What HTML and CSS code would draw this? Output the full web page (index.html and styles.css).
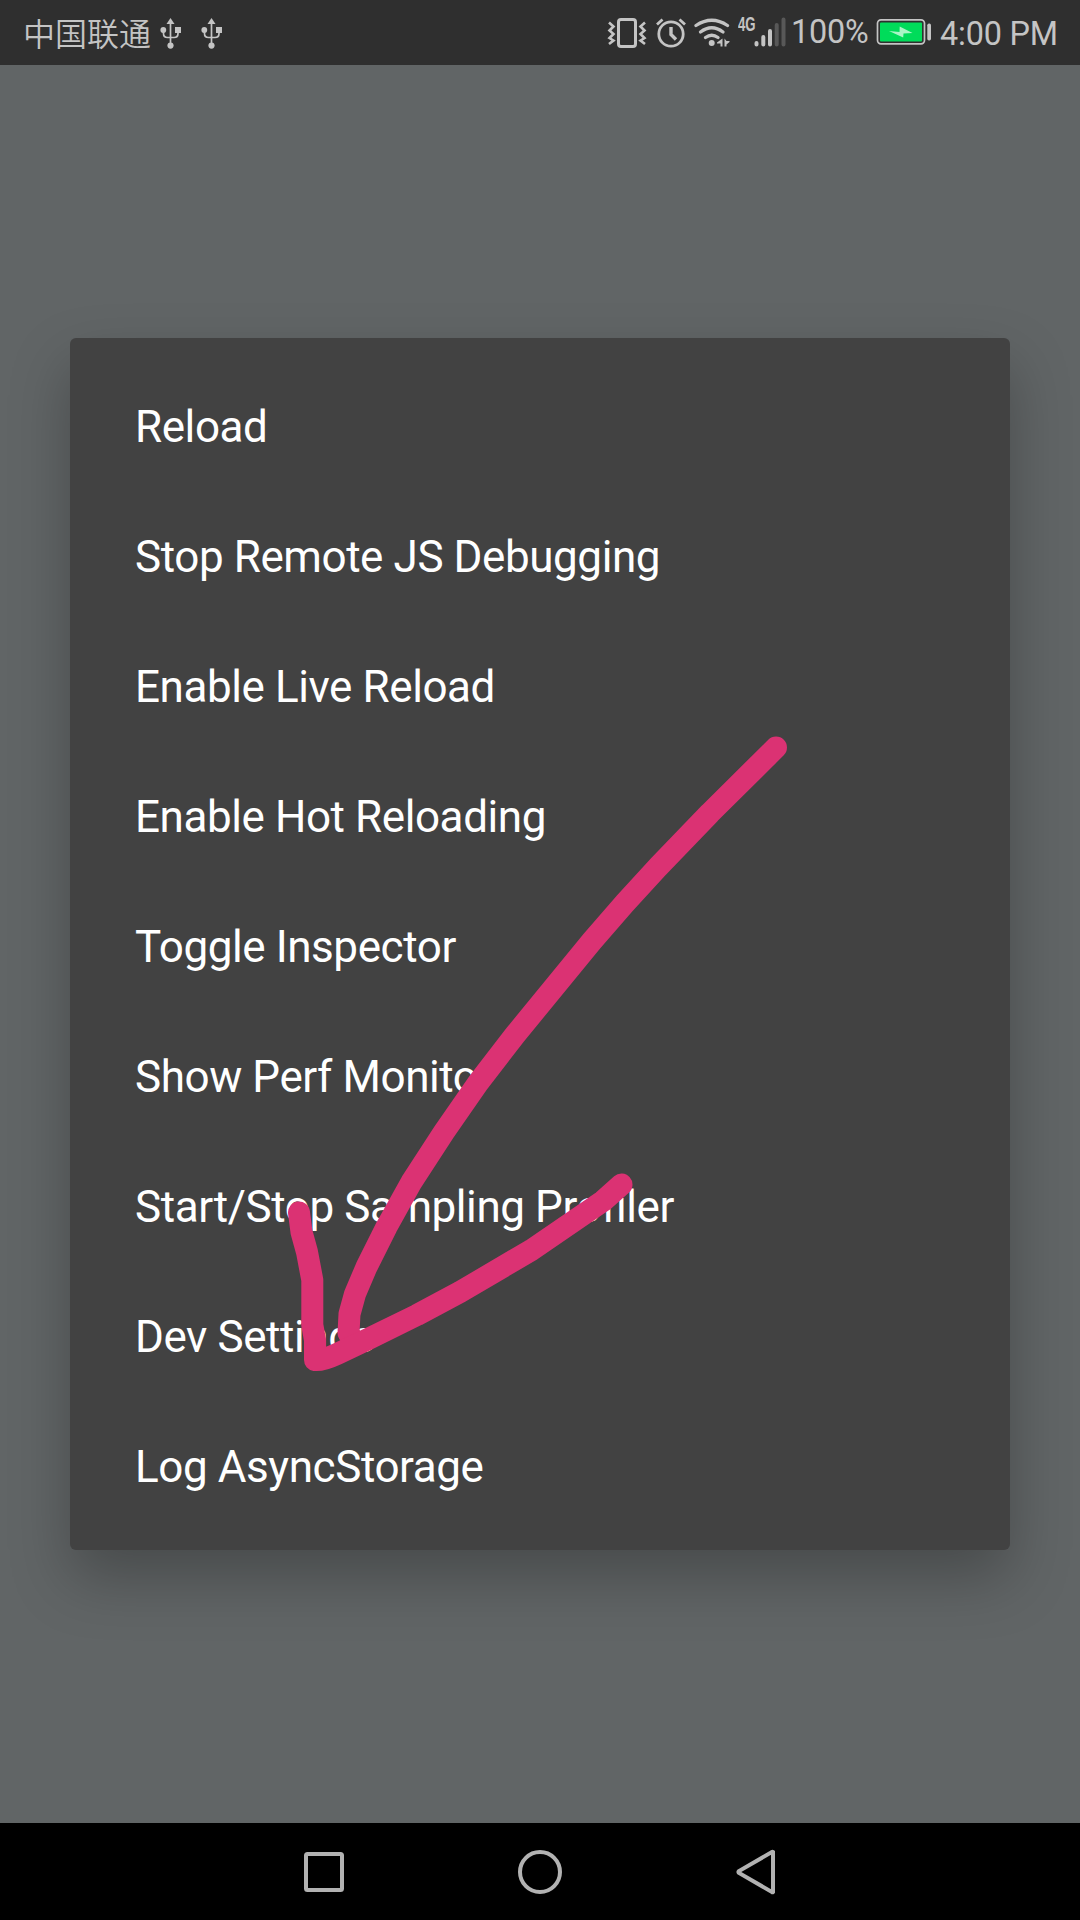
FILE: index.html
```html
<!DOCTYPE html>
<html lang="en">
<head>
<meta charset="utf-8">
<title>Developer menu</title>
<link rel="stylesheet" href="styles.css">
</head>
<body>
<div class="screen">
  <header class="status-bar">
    <span class="carrier">中国联通</span>
    <svg class="usb" width="22" height="33" viewBox="160 17 22 33"><path d="M170.500 22V45M163.500 31v2.500q0 4 4 4h6.500q4 0 4-4V31" fill="none" stroke="#c4c4c4" stroke-width="1.700"/><path d="M170.500 18l4 6h-8z"/><circle cx="163.300" cy="30" r="2.900"/><path d="M175 27h6v6h-6z"/><circle cx="170.500" cy="45.600" r="3.100"/></svg>
    <svg class="usb usb-second" width="22" height="33" viewBox="160 17 22 33"><path d="M170.500 22V45M163.500 31v2.500q0 4 4 4h6.500q4 0 4-4V31" fill="none" stroke="#c4c4c4" stroke-width="1.700"/><path d="M170.500 18l4 6h-8z"/><circle cx="163.300" cy="30" r="2.900"/><path d="M175 27h6v6h-6z"/><circle cx="170.500" cy="45.600" r="3.100"/></svg>
    <div class="status-right">
      <svg width="40" height="34" viewBox="607 16 40 34"><g fill="none" stroke="#c4c4c4"><rect x="618.500" y="19.500" width="17" height="27" rx="2.500" stroke-width="3"/><path d="M609 22.500l4.500 4-4 4 4 3.500-4 4 4 2.500-4.500 3.500M645 22.500l-4.500 4 4 4-4 3.500 4 4-4 2.500 4.500 3.500" stroke-width="2.600"/></g></svg>
      <svg class="alarm" width="32" height="34" viewBox="655 16 32 34"><g fill="none" stroke="#c4c4c4" stroke-width="2.800"><circle cx="671" cy="34" r="12.200"/><path d="M671 27v7.500l5 5" stroke-width="3.400"/><path d="M657 24.500l5.500-5M685 24.500l-5.500-5"/></g></svg>
      <svg class="wifi" width="38" height="34" viewBox="693 16 38 34"><g fill="none" stroke="#c4c4c4" stroke-width="3.300" stroke-linecap="round"><path d="M696 25.500q15.700-10.500 31.500 0"/><path d="M700.500 32q11.200-8.500 22.500 0"/><path d="M705.500 37.500q6.200-4.500 12.500 0"/></g><circle cx="711.700" cy="43" r="3"/><path d="M722.500 38.500v8h-2v-3h-3.500v-1zM724.500 38.500l2 2.500h3v1l-3 2.500v2h-2z"/></svg>
      <span class="network">4G</span>
      <svg class="signal" width="33" height="32" viewBox="754 16 33 32"><g stroke-width="4" stroke-linecap="round" stroke="#c4c4c4"><path d="M756.500 43v1.600M763.300 37v7.600M770 31v13.600"/><path stroke="#585858" d="M776.700 25v19.600M783.500 19.500v25.100"/></g></svg>
      <span class="percent">100%</span>
      <svg class="battery" width="56" height="28" viewBox="876 18 56 28"><rect x="877.500" y="19.800" width="47" height="24" rx="3.500" fill="none" stroke="#c4c4c4" stroke-width="1.700"/><rect x="880" y="22.500" width="42" height="19" rx="1" fill="#00dc5a"/><path d="M889 31l10.500 1 .2-5.500 12.800 6.500-9 .5-.3 4z" fill="#a9f5c6"/><rect x="927.300" y="23.500" width="3.700" height="17" rx="1.700"/></svg>
      <span class="clock">4:00 PM</span>
    </div>
  </header>
  <main class="stage">
    <ul class="menu">
      <li>Reload</li>
      <li>Stop Remote JS Debugging</li>
      <li>Enable Live Reload</li>
      <li>Enable Hot Reloading</li>
      <li>Toggle Inspector</li>
      <li>Show Perf Monitor</li>
      <li>Start/Stop Sampling Profiler</li>
      <li>Dev Settings</li>
      <li>Log AsyncStorage</li>
    </ul>
  </main>
  <nav class="nav-bar">
    <svg width="48" height="48" viewBox="300 1848 48 48"><rect x="306" y="1854" width="36" height="36" rx="1.500"/></svg>
    <svg width="48" height="48" viewBox="516 1848 48 48"><circle cx="540" cy="1872" r="20"/></svg>
    <svg width="48" height="48" viewBox="732 1848 48 48"><path d="M773 1852v40q-.5.500-1 0l-33-19q-1-1 0-2l33-19q.5-.5 1 0z"/></svg>
  </nav>
  <svg class="arrow" width="1080" height="1920" viewBox="0 0 1080 1920">
    <path d="M776 747.500L710 813 658 867 625 903 592 941 515 1035 478 1083 444 1132 411.500 1182 386.500 1227 366.500 1267 355 1294 349.500 1314 348.500 1333 355 1343"/>
    <path d="M299 1212.500L301.500 1232 307 1252 312.300 1280V1325L315 1340V1360Q322 1361 337 1354L360 1343 417 1315 460 1292 531.500 1250 603 1201 621.500 1184.500"/>
  </svg>
</div>
</body>
</html>
```
FILE: styles.css
```css
body {
  margin: 0;
}

.screen {
  position: relative;
  display: flex;
  flex-direction: column;
  width: 1080px;
  height: 1920px;
  overflow: hidden;
  background: #616566;
  font-family: Roboto, "Noto Sans CJK SC", sans-serif;
}

.status-bar {
  display: flex;
  align-items: flex-start;
  height: 65px;
  background: #2f2f2f;
  color: #c4c4c4;
  font-size: 32.4px;
  white-space: nowrap;
}

.status-bar svg {
  flex: none;
  margin-top: 16px;
  fill: #c4c4c4;
}

.carrier {
  width: 137px;
  padding: 9px 0 0 23px;
  font-family: "Noto Sans CJK SC", sans-serif;
  font-size: 32px;
  font-weight: 350;
  line-height: 46px;
}

.status-bar .usb {
  margin-top: 17px;
}

.usb-second {
  margin-left: 19px;
}

.status-right {
  display: flex;
  margin-left: auto;
  padding-right: 20px;
}

.alarm {
  margin-left: 8px;
}

.wifi {
  margin-left: 6px;
}

.network {
  width: 17px;
  margin: 15px -1px 0 7px;
  font-family: "Liberation Sans", sans-serif;
  font-size: 20px;
  font-weight: 700;
  line-height: 19px;
  transform: scaleX(0.66);
  transform-origin: left;
}

.percent {
  width: 79px;
  margin: 14px 0 0 4px;
  letter-spacing: -0.2px;
  line-height: 37px;
}

.status-bar .battery {
  margin: 18px 0 0 6px;
}

.clock {
  width: 120px;
  margin: 16px 0 0 8px;
  letter-spacing: -0.2px;
  line-height: 37px;
}

.stage {
  display: flex;
  flex: 1;
  align-items: center;
  justify-content: center;
}

.menu {
  box-sizing: border-box;
  width: 940px;
  height: 1212px;
  margin: 0;
  padding: 24px 65px 18px;
  border-radius: 6px;
  background: #424242;
  box-shadow: 0 28px 60px rgba(0, 0, 0, 0.26);
  color: #fff;
  font-size: 44px;
  letter-spacing: -0.42px;
  line-height: 130px;
  list-style: none;
}

.nav-bar {
  display: flex;
  align-items: center;
  justify-content: center;
  gap: 168px;
  height: 97px;
  background: #000;
}

.nav-bar svg {
  fill: none;
  stroke: #b2b2b2;
  stroke-width: 4;
}

/* Hand-drawn marker pointing at the settings entry */
.arrow {
  position: absolute;
  inset: 0;
  fill: none;
  stroke: #db3273;
  stroke-width: 22;
  stroke-linecap: round;
  stroke-linejoin: round;
}
```
